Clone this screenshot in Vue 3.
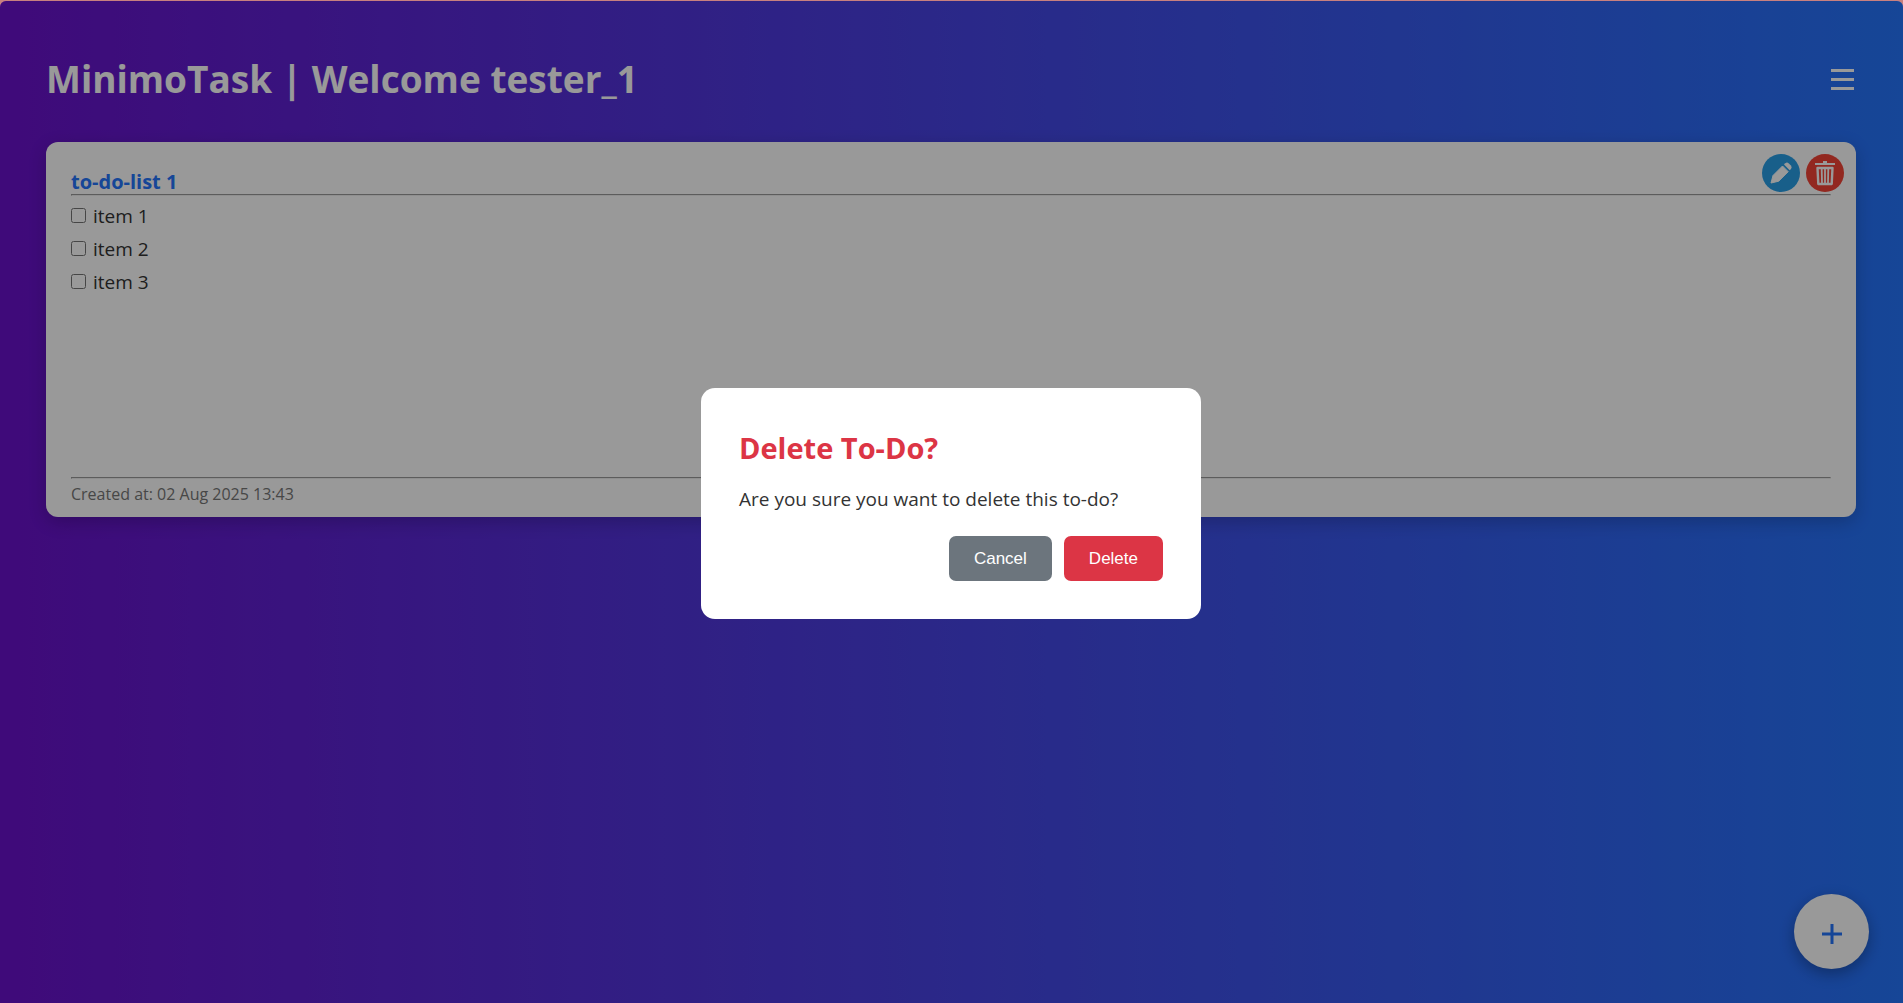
<script setup>
import { ref } from 'vue'

const username = ref('tester_1')
const todo = ref({
  title: 'to-do-list 1',
  createdAt: '02 Aug 2025 13:43',
  items: [
    { id: 1, text: 'item 1', done: false },
    { id: 2, text: 'item 2', done: false },
    { id: 3, text: 'item 3', done: false },
  ],
})
</script>

<template>
  <div class="frame">
    <div class="page">
      <header class="header">
        <h1>MinimoTask | Welcome {{ username }}</h1>
        <button class="menu" type="button" aria-label="Menu">
          <svg width="25" height="22" viewBox="0 0 25 22">
            <path d="M0 2.500H23M0 11.500H23M0 20.500H23" stroke="#fff" stroke-width="3" />
          </svg>
        </button>
      </header>

      <main class="card">
        <div class="actions">
          <button class="round edit" type="button" aria-label="Edit">
            <svg width="38" height="38" viewBox="0 0 38 38" fill="#fff">
              <path d="M9 29 L11 21.500 L20.500 12 L26.200 17.700 L16.700 27.200 Z" stroke="#fff" stroke-linejoin="round" />
              <path d="M22 10.500 L23.300 9.200 Q25 7.800 26.800 9.400 L28.900 11.500 Q30.400 13.200 29 15 L27.700 16.200 Z" />
            </svg>
          </button>
          <button class="round delete" type="button" aria-label="Delete">
            <svg width="38" height="38" viewBox="0 0 38 38" fill="none" stroke="#fff">
              <path d="M9 10H29" stroke-width="2" />
              <path d="M17 8.500H21" stroke-width="3" />
              <path d="M11.500 14H26.500L25.700 30H12.300Z" stroke-width="2.400" stroke-linejoin="round" />
              <path d="M15.700 14L16 29M19 14V29M22.300 14L22 29" stroke-width="1.800" />
            </svg>
          </button>
        </div>
        <h2>{{ todo.title }}</h2>
        <hr />
        <ul class="items">
          <li v-for="item in todo.items" :key="item.id">
            <label>
              <input v-model="item.done" type="checkbox" />
              <span>{{ item.text }}</span>
            </label>
          </li>
        </ul>
        <hr />
        <p class="created">Created at: {{ todo.createdAt }}</p>
      </main>

      <button class="fab" type="button" aria-label="Add to-do">
        <svg width="20" height="20" viewBox="0 0 20 20">
          <path d="M10 0V20M0 10H20" stroke="#2575fc" stroke-width="3" />
        </svg>
      </button>

      <div class="overlay">
        <div class="modal" role="dialog" aria-modal="true" aria-labelledby="dialog-title">
          <h2 id="dialog-title">Delete To-Do?</h2>
          <p>Are you sure you want to delete this to-do?</p>
          <div class="buttons">
            <button class="cancel" type="button">Cancel</button>
            <button class="confirm" type="button">Delete</button>
          </div>
        </div>
      </div>
    </div>
  </div>
</template>

<style>
body {
  margin: 0;
}
</style>

<style scoped>
* {
  box-sizing: border-box;
}

.frame {
  padding-top: 1px;
  background: #c8807f;
  font-family: "Segoe UI", "Open Sans", sans-serif;
  color: #333;
}

.page {
  position: relative;
  min-height: calc(100vh - 1px);
  padding: 0 47px 0 46px;
  border-radius: 6px 6px 0 0;
  overflow: hidden;
  background: linear-gradient(to right, #6a11cb, #2575fc);
}

button {
  border: none;
  cursor: pointer;
}

h1,
h2,
p,
ul {
  margin: 0;
  padding: 0;
}

.header {
  display: flex;
  align-items: center;
  justify-content: space-between;
  height: 141px;
  padding-top: 14px;
}

h1 {
  color: #fff;
  font-size: 37px;
  line-height: 48px;
}

.menu {
  display: flex;
  padding: 0;
  background: none;
}

.card {
  position: relative;
  display: flex;
  flex-direction: column;
  height: 375px;
  padding: 27px 25px 8px;
  border-radius: 12px;
  background: #fff;
  box-shadow: 0 5px 18px rgba(0, 0, 0, 0.2);
}

.card h2 {
  color: #2575fc;
  font-size: 20px;
  line-height: 25px;
}

hr {
  width: 100%;
  margin: 0;
  border: 1px solid;
  border-color: #9a9a9a #eee #eee #9a9a9a;
}

.items {
  flex: 1;
  padding-top: 4px;
  list-style: none;
  font-size: 19px;
  line-height: 33px;
}

.items label {
  display: flex;
  gap: 7px;
}

.items input {
  width: 15px;
  height: 15px;
  margin: 8px 0 0;
}

.created {
  color: #777;
  font-size: 16px;
  line-height: 30px;
}

.actions {
  position: absolute;
  top: 12px;
  right: 12px;
  display: flex;
  gap: 6px;
}

.round {
  width: 38px;
  height: 38px;
  padding: 0;
  border-radius: 50%;
}

.round svg {
  display: block;
}

.edit {
  background: #289fe7;
}

.delete {
  background: #f44336;
}

.fab {
  position: absolute;
  right: 34px;
  bottom: 34px;
  display: flex;
  align-items: center;
  justify-content: center;
  width: 75px;
  height: 75px;
  padding: 5px 0 0;
  border-radius: 50%;
  background: #fff;
  box-shadow: 0 5px 15px rgba(0, 0, 0, 0.3);
}

.overlay {
  position: absolute;
  inset: 0;
  display: flex;
  align-items: center;
  justify-content: center;
  padding: 2px 1px 0 0;
  background: rgba(0, 0, 0, 0.4);
}

.modal {
  width: 500px;
  padding: 38px;
  border-radius: 14px;
  background: #fff;
}

.modal h2 {
  color: #dc3545;
  font-size: 29px;
  line-height: 44px;
}

.modal p {
  margin: 14px 0 22px;
  font-size: 19px;
  line-height: 30px;
}

.buttons {
  display: flex;
  justify-content: flex-end;
  gap: 12px;
}

.buttons button {
  padding: 0 25px;
  border-radius: 7px;
  color: #fff;
  font-family: "Liberation Sans", Arial, sans-serif;
  font-size: 17px;
  line-height: 45px;
}

.cancel {
  background: #6c757d;
}

.confirm {
  background: #dc3545;
}
</style>
